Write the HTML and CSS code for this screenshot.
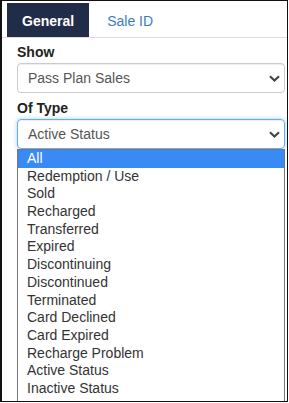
FILE: index.html
```html
<!DOCTYPE html>
<html lang="en">
<head>
    <meta charset="UTF-8">
    <meta name="viewport" content="width=device-width, initial-scale=1.0">
    <title>Filters</title>
    <link rel="stylesheet" href="styles.css">
</head>
<body>
    <div class="panel">
        <div class="tabs">
            <div class="tab active">General</div>
            <div class="tab">Sale ID</div>
        </div>
        <div class="content">
            <div class="label">Show</div>
            <div class="select">
                <span>Pass Plan Sales</span>
                <svg class="chevron" width="11" height="7" viewBox="0 0 11 7"><path d="M1 1.3 L5.5 5.5 L10 1.3" fill="none" stroke="#444" stroke-width="2.2"/></svg>
            </div>
            <div class="label second">Of Type</div>
            <div class="select focused">
                <span>Active Status</span>
                <svg class="chevron" width="11" height="7" viewBox="0 0 11 7"><path d="M1 1.3 L5.5 5.5 L10 1.3" fill="none" stroke="#444" stroke-width="2.2"/></svg>
            </div>
            <div class="options">
                <div class="option selected">All</div>
                <div class="option">Redemption / Use</div>
                <div class="option">Sold</div>
                <div class="option">Recharged</div>
                <div class="option">Transferred</div>
                <div class="option">Expired</div>
                <div class="option">Discontinuing</div>
                <div class="option">Discontinued</div>
                <div class="option">Terminated</div>
                <div class="option">Card Declined</div>
                <div class="option">Card Expired</div>
                <div class="option">Recharge Problem</div>
                <div class="option">Active Status</div>
                <div class="option">Inactive Status</div>
            </div>
        </div>
    </div>
</body>
</html>
```
FILE: styles.css
```css
/* Filter panel */
body {
    margin: 0;
    font-family: "Liberation Sans", Arial, sans-serif;
    background-color: #fff;
}

.panel {
    box-sizing: border-box;
    width: 288px;
    height: 402px;
    border: 1px solid #111;
    border-left-width: 2px;
    overflow: hidden;
}

.tabs {
    display: flex;
    padding: 2px 0 0 5px;
    border-bottom: 1px solid #ddd;
}

.tab {
    height: 34px;
    line-height: 36px;
    padding: 0 15px;
    font-size: 14px;
    color: #3b7dc4;
}

.tab.active {
    background-color: #212c48;
    color: #fff;
    font-weight: bold;
    margin-right: 3px;
}

.content {
    padding: 0 0 0 15px;
}

.label {
    margin-top: 6px;
    font-size: 14px;
    font-weight: bold;
    line-height: 16px;
    color: #222;
}

.label.second {
    margin-top: 7px;
}

.select {
    box-sizing: border-box;
    display: flex;
    align-items: center;
    justify-content: space-between;
    width: 268px;
    height: 30px;
    margin-top: 3px;
    padding: 0 4px 0 10px;
    border: 1px solid #ccc;
    border-radius: 4px;
    font-size: 14px;
    color: #555;
    box-shadow: inset 0 1px 1px rgba(0, 0, 0, 0.075);
}

.select.focused {
    border-color: #66afe9;
    box-shadow: inset 0 1px 1px rgba(0, 0, 0, 0.075), 0 0 4px rgba(102, 175, 233, 0.6);
}

.options {
    box-sizing: border-box;
    width: 268px;
    border: 1px solid #767676;
    padding-bottom: 3px;
}

.option {
    height: 17.7px;
    line-height: 17.7px;
    padding-left: 9px;
    font-size: 14px;
    color: #333;
    white-space: nowrap;
}

.option.selected {
    background-color: #3a8af6;
    color: #fff;
}
```
